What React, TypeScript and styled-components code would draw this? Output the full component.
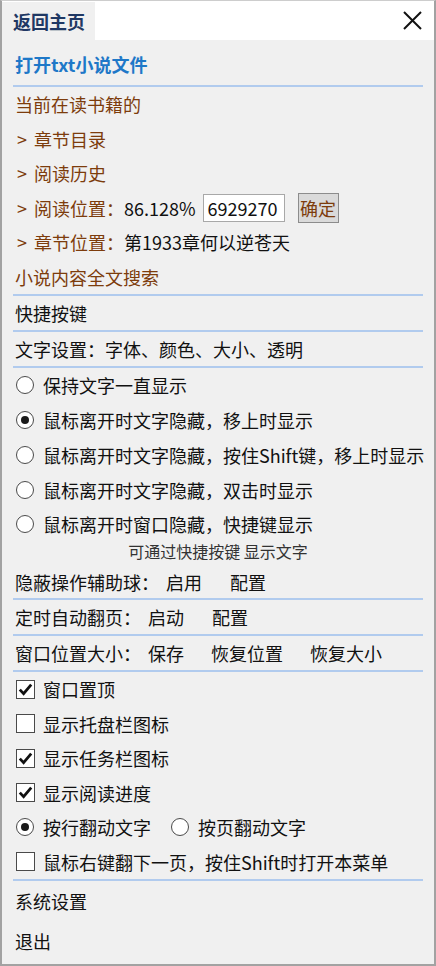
import React from 'react';
import styled, { createGlobalStyle } from 'styled-components';

const Global = createGlobalStyle`
  html, body { margin: 0; padding: 0; background: #f0f0f0; }
  * { box-sizing: border-box; }
`;

const BROWN = '#7d3c0c';

const Window = styled.div`
  width: 436px;
  height: 966px;
  border: 2px solid #a2a2a2;
  border-top: 1px solid #cdcdcd;
  background: #f0f0f0;
  display: flex;
  flex-direction: column;
  font-family: "Noto Sans CJK SC", "Noto Sans", sans-serif;
  font-size: 18px;
  line-height: 1;
  color: #111;
  overflow: hidden;
`;

const Header = styled.div`
  height: 39px;
  flex: none;
  display: flex;
  justify-content: space-between;
  align-items: stretch;
  background: #fff;
`;

const HomeTab = styled.div`
  width: 93px;
  margin-top: 1px;
  background: #f0f0f0;
  display: flex;
  align-items: center;
  padding-left: 11px;
  font-weight: 700;
  color: #1f3864;
`;

const CloseBtn = styled.div`
  display: flex;
  align-items: center;
  padding-right: 12px;
`;

const Body = styled.div`
  flex: 1;
  display: flex;
  flex-direction: column;
  padding: 6px 0 3px;
`;

const Row = styled.div<{ $h: number; $color?: string; $bold?: boolean }>`
  height: ${p => p.$h}px;
  flex: none;
  display: flex;
  align-items: center;
  padding-left: 13px;
  white-space: nowrap;
  color: ${p => p.$color || '#111'};
  font-weight: ${p => (p.$bold ? 700 : 400)};
`;

const HintRow = styled.div`
  height: 23.25px;
  flex: none;
  display: flex;
  justify-content: center;
  align-items: center;
  padding-bottom: 4px;
  font-size: 16px;
  color: #333;
`;

const Sep = styled.div<{ $mt?: number }>`
  height: 2px;
  flex: none;
  margin: ${p => p.$mt || 0}px 11px 0;
  background: #b1cbee;
`;

const Chevron = styled.span`
  display: inline-block;
  width: 19px;
  padding-left: 2px;
  color: ${BROWN};
`;

const Brown = styled.span`
  color: ${BROWN};
`;

const NumInput = styled.div`
  margin-left: 7px;
  width: 82px;
  height: 28px;
  background: #fff;
  border: 1px solid #a8a8a8;
  display: flex;
  align-items: center;
  padding-left: 4px;
  color: #111;
`;

const OkButton = styled.div`
  margin-left: 13px;
  width: 41px;
  height: 30px;
  background: #dadada;
  border: 1px solid #8c8c8c;
  display: flex;
  align-items: center;
  justify-content: center;
  color: ${BROWN};
`;

const Opt = styled.span<{ $ml: number }>`
  margin-left: ${p => p.$ml}px;
`;

const RadioCircle = styled.span<{ $on?: boolean; $ml?: number }>`
  flex: none;
  width: 18px;
  height: 18px;
  margin-left: ${p => p.$ml ?? 1}px;
  margin-right: 9px;
  border-radius: 50%;
  border: 1px solid #4a4a4a;
  background: #fff;
  display: flex;
  align-items: center;
  justify-content: center;
  &::after {
    content: '';
    display: ${p => (p.$on ? 'block' : 'none')};
    width: 8px;
    height: 8px;
    border-radius: 50%;
    background: #1a1a1a;
  }
`;

const CheckBox = styled.span`
  flex: none;
  width: 19px;
  height: 19px;
  margin-left: 1px;
  margin-right: 8px;
  border: 1px solid #4a4a4a;
  background: #fff;
  display: flex;
  align-items: center;
  justify-content: center;
`;

const Check = ({ on }: { on?: boolean }) => (
  <CheckBox>
    {on && (
      <svg width="15" height="15" viewBox="0 0 15 15">
        <path d="M1.8 7.6 L5.6 11.6 L13.2 2.6" fill="none" stroke="#111" strokeWidth="2.8" strokeLinejoin="miter" />
      </svg>
    )}
  </CheckBox>
);

const RADIOS = [
  { t: '保持文字一直显示', on: false },
  { t: '鼠标离开时文字隐藏，移上时显示', on: true },
  { t: '鼠标离开时文字隐藏，按住Shift键，移上时显示', on: false },
  { t: '鼠标离开时文字隐藏，双击时显示', on: false },
  { t: '鼠标离开时窗口隐藏，快捷键显示', on: false },
];

const CHECKS = [
  { t: '窗口置顶', on: true },
  { t: '显示托盘栏图标', on: false },
  { t: '显示任务栏图标', on: true },
  { t: '显示阅读进度', on: true },
];

export default function App() {
  return (
    <>
      <Global />
      <Window>
        <Header>
          <HomeTab>返回主页</HomeTab>
          <CloseBtn>
            <svg width="19" height="19" viewBox="0 0 19 19">
              <path d="M1 1 L18 18 M18 1 L1 18" stroke="#111" strokeWidth="2" fill="none" />
            </svg>
          </CloseBtn>
        </Header>
        <Body>
          <Row $h={36} $color="#1e78c8" $bold>打开txt小说文件</Row>
          <Sep $mt={3} />
          <Row $h={34.5} $color={BROWN}>当前在读书籍的</Row>
          <Row $h={34.5} $color={BROWN}><Chevron>&gt;</Chevron>章节目录</Row>
          <Row $h={34.5} $color={BROWN}><Chevron>&gt;</Chevron>阅读历史</Row>
          <Row $h={34.5}>
            <Chevron>&gt;</Chevron>
            <Brown>阅读位置：</Brown>86.128%
            <NumInput>6929270</NumInput>
            <OkButton>确定</OkButton>
          </Row>
          <Row $h={34.5}>
            <Chevron>&gt;</Chevron>
            <Brown>章节位置：</Brown>第1933章何以逆苍天
          </Row>
          <Row $h={34.5} $color={BROWN}>小说内容全文搜索</Row>
          <Sep />
          <Row $h={34}>快捷按键</Row>
          <Sep />
          <Row $h={34}>文字设置：字体、颜色、大小、透明</Row>
          <Sep />
          {RADIOS.map(r => (
            <Row key={r.t} $h={34.75}>
              <RadioCircle $on={r.on} />
              {r.t}
            </Row>
          ))}
          <HintRow>可通过快捷按键 显示文字</HintRow>
          <Row $h={33}>
            隐蔽操作辅助球：<Opt $ml={7}>启用</Opt><Opt $ml={28}>配置</Opt>
          </Row>
          <Sep />
          <Row $h={34}>
            定时自动翻页：<Opt $ml={7}>启动</Opt><Opt $ml={28}>配置</Opt>
          </Row>
          <Sep />
          <Row $h={34}>
            窗口位置大小：<Opt $ml={7}>保存</Opt><Opt $ml={27}>恢复位置</Opt><Opt $ml={27}>恢复大小</Opt>
          </Row>
          <Sep />
          {CHECKS.map(c => (
            <Row key={c.t} $h={34.5}>
              <Check on={c.on} />
              {c.t}
            </Row>
          ))}
          <Row $h={34.5}>
            <RadioCircle $on />
            按行翻动文字
            <RadioCircle $ml={20} />
            按页翻动文字
          </Row>
          <Row $h={34.5}>
            <Check />
            鼠标右键翻下一页，按住Shift时打开本菜单
          </Row>
          <Sep />
          <Row $h={40}>系统设置</Row>
          <Row $h={40}>退出</Row>
        </Body>
      </Window>
    </>
  );
}
